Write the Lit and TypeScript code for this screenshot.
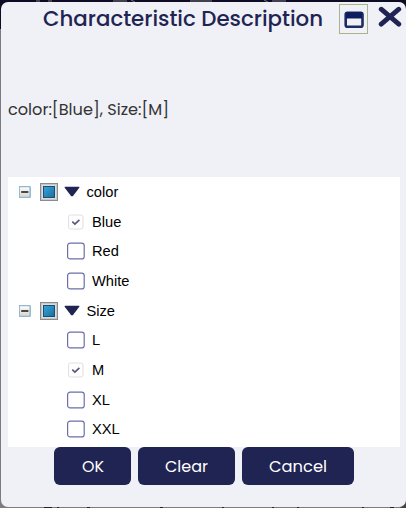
import { LitElement, html, svg, css } from "lit";
import { customElement, property } from "lit/decorators.js";

// One line of text fitted to a known advance width.
@customElement("fit-text")
class FitText extends LitElement {
  @property() text = "";
  @property({ type: Number }) w = 100;
  @property({ type: Number }) h = 30;
  @property({ type: Number }) base = 20;
  static styles = css`
    :host { display: block; }
    svg { display: block; overflow: visible; }
    text { fill: currentColor; }
  `;
  render() {
    return html`<svg width=${this.w} height=${this.h}>
      ${svg`<text x="0" y=${this.base} textLength=${this.w} lengthAdjust="spacingAndGlyphs">${this.text}</text>`}
    </svg>`;
  }
}

interface Option { label: string; checked?: boolean; }
interface Group { label: string; options: Option[]; }

@customElement("app-root")
class AppRoot extends LitElement {
  groups: Group[] = [
    { label: "color", options: [{ label: "Blue", checked: true }, { label: "Red" }, { label: "White" }] },
    { label: "Size", options: [{ label: "L" }, { label: "M", checked: true }, { label: "XL" }, { label: "XXL" }] },
  ];

  static styles = css`
    :host {
      display: block; box-sizing: border-box; position: relative;
      width: 406px; height: 508px; padding: 2px 0 1px 1px; overflow: hidden;
      background: linear-gradient(#0e0c24 0 29px, #7d7b7d 29px);
      font-family: Poppins, Inter, sans-serif; color: #202452;
    }
    .backdrop { position: absolute; left: 0; top: 0; }
    .dialog {
      position: relative; box-sizing: border-box; height: 505px; width: 405px;
      border-radius: 7px; background: #f0f0f7; padding: 0 6px 0 7px;
      display: flex; flex-direction: column;
    }
    .head { height: 34px; flex: none; display: flex; padding-left: 35px; }
    .title { width: 280px; font-size: 22px; font-weight: 500; }
    .max {
      box-sizing: border-box; width: 29px; height: 30px; margin: 2px 0 0 16px;
      border: 1px solid #a6b58c; display: block; flex: none;
    }
    .max svg, .close svg { display: block; }
    .close { margin: 3px 0 0 10px; flex: none; }
    .summary { height: 141px; flex: none; padding-top: 56px; box-sizing: border-box; font-size: 16px; font-weight: 400; color: #333; }
    .tree {
      box-sizing: border-box; width: 392px; height: 270px; flex: none; background: #fff;
      color: #000; font: 14.67px "Liberation Sans", Arial, sans-serif; padding-top: .17px;
    }
    .row { height: 29.67px; display: flex; align-items: center; }
    .group { padding-left: 11px; }
    .leaf { padding-left: 59px; }
    .row svg { display: block; flex: none; }
    .minus { margin-right: 9px; }
    .arrow { margin: 0 6.5px 0 6px; }
    .box { margin-right: 7px; }
    .actions { display: flex; gap: 7px; padding-left: 46px; }
    .btn {
      height: 38px; border-radius: 6px; background: #202452; color: #fff;
      display: flex; justify-content: center; font-size: 16px; font-weight: 400;
    }
    .ok { width: 77px; }
    .clear { width: 97px; }
    .cancel { width: 112px; }
  `;

  renderGroup(g: Group) {
    return html`
      <div class="row group">
        <svg class="minus" width="12" height="12" viewBox="0 0 12 12">
          <defs><linearGradient id="m" x2="0" y2="1"><stop stop-color="#fff"/><stop offset="1" stop-color="#d8d0c5"/></linearGradient></defs>
          <rect x=".2" y=".6" width="11" height="11" rx="1" fill="url(#m)" stroke="#8fb9d2" stroke-width="1.5"/>
          <path d="M2.2 6h7.2" stroke="#111" stroke-width="1.5"/>
        </svg>
        <svg width="18" height="18" viewBox="0 0 18 18">
          <defs><linearGradient id="b" x2="1" y2="1"><stop stop-color="#38a7dc"/><stop offset="1" stop-color="#1b6d9c"/></linearGradient></defs>
          <rect x=".5" y=".5" width="17" height="17" fill="#ddd" stroke="#8c8c8c"/>
          <rect x="1.5" y="1.5" width="15" height="15" fill="none" stroke="#b4b4b4" stroke-opacity=".5"/>
          <rect x="3.5" y="3.5" width="11" height="11" fill="url(#b)" stroke="#174f7b"/>
        </svg>
        <svg class="arrow" width="16" height="12" viewBox="0 0 16 12">
          <path d="M.7 .7H15.3V1.8L8.8 10.3H7.2L.7 1.8z" fill="#202452"/>
        </svg>
        <span>${g.label}</span>
      </div>
      ${g.options.map(o => html`<div class="row leaf">
        <svg class="box" width="18" height="18" viewBox="0 0 18 18">
          ${o.checked
            ? svg`<rect x="1.5" y="2" width="14.5" height="14" rx="2" fill="#fefefe" stroke="#e0e0e5"/>
              <path d="M5.3 8.7l2.6 2.4 4.5-4.3" fill="none" stroke="#55577a" stroke-width="1.6"/>`
            : svg`<rect x=".6" y="1.1" width="16.6" height="15.8" rx="2.5" fill="#fff" stroke="#6b6eac" stroke-width="1.2"/>`}
        </svg>
        <span>${o.label}</span>
      </div>`)}`;
  }

  render() {
    return html`
      <svg class="backdrop" width="406" height="508">
        <path d="M36 1h4M48 1h4M113 1h14M131 0l4 2M190 1h22M264 0l4 2M272 1h14" stroke="#77767f"/>
        <path d="M44 507.5h8M57 507.5h2M87 507.5h3M160 507.5h3M222 507.5h2M272 507.5h2M297 507.5h2M362 507.5h2M390 507.5h4" stroke="#222"/>
        <path d="M400 508L406 500V508z" fill="#494349"/>
      </svg>
      <div class="dialog">
        <div class="head">
          <fit-text class="title" text="Characteristic Description" w="280" h="34" base="24"></fit-text>
          <span class="max">
            <svg width="27" height="28" viewBox="0 0 27 28">
              <rect x="5.7" y="7.7" width="16.8" height="14" rx="1.8" fill="#f0f0f7" stroke="#202a62" stroke-width="2.6"/>
              <path d="M6 7.3h16v6.2H6z" fill="#0c1c5c"/>
            </svg>
          </span>
          <span class="close">
            <svg width="24" height="22" viewBox="0 0 24 22">
              <path d="M3.2 4.2L20.8 19.2M20.8 4.2L3.2 19.2" stroke="#202452" stroke-width="4.8" stroke-linecap="round"/>
            </svg>
          </span>
        </div>
        <div class="summary"><fit-text text="color:[Blue], Size:[M]" w="161" h="34" base="23"></fit-text></div>
        <div class="tree">${this.groups.map(g => this.renderGroup(g))}</div>
        <div class="actions">
          <div class="btn ok"><fit-text text="OK" w="22" h="38" base="25"></fit-text></div>
          <div class="btn clear"><fit-text text="Clear" w="43" h="38" base="25"></fit-text></div>
          <div class="btn cancel"><fit-text text="Cancel" w="58" h="38" base="25"></fit-text></div>
        </div>
      </div>`;
  }
}
